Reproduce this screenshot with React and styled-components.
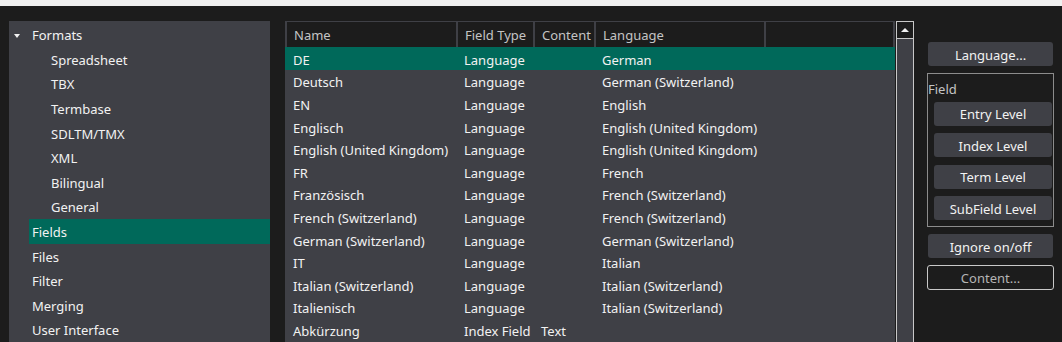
import React from 'react';
import styled, { createGlobalStyle } from 'styled-components';

const COLOR = {
  page: '#1c1c1c',
  panel: '#3f4046',
  accent: '#00695a',
  text: '#f2f2f2',
  muted: '#c4c4c4',
  faded: '#b4b4b4',
  line: '#c8c8c8',
  strip: '#f0f0f0',
};

const GlobalStyle = createGlobalStyle`
  html, body {
    margin: 0;
    padding: 0;
    background: ${COLOR.page};
    overflow: hidden;
  }
  body {
    font-family: "Noto Sans", "Open Sans", sans-serif;
    font-size: 13px;
    color: ${COLOR.text};
  }
`;

const Window = styled.div`
  height: 342px;
  display: flex;
  flex-direction: column;
  overflow: hidden;
`;

const TopStrip = styled.div`
  height: 6px;
  background: ${COLOR.strip};
  flex-shrink: 0;
`;

const Body = styled.div`
  flex: 1;
  display: flex;
  padding: 15px 0 0 9px;
  min-height: 0;
`;

/* ---------- navigation tree ---------- */

const Nav = styled.div`
  width: 261px;
  background: ${COLOR.panel};
  padding-top: 1.5px;
  flex-shrink: 0;
`;

const NavItem = styled.div`
  height: 24.6px;
  box-sizing: border-box;
  padding-top: 1px;
  display: flex;
  align-items: center;
  margin-left: 20px;
  padding-left: ${(p) => (p.$child ? 22 : 3)}px;
  background: ${(p) => (p.$active ? COLOR.accent : 'transparent')};
  white-space: nowrap;
  position: relative;
`;

const Caret = styled.span`
  position: absolute;
  left: -15px;
  top: 11px;
  width: 0;
  height: 0;
  border-left: 3.5px solid transparent;
  border-right: 3.5px solid transparent;
  border-top: 4px solid ${COLOR.text};
`;

/* ---------- grid ---------- */

const GridWrap = styled.div`
  margin-left: 15px;
  width: 610px;
  background: ${COLOR.panel};
  padding-top: 1px;
  overflow: hidden;
  flex-shrink: 0;
`;

const COLS = '169px 75px 59px 168px 127px';

const HeaderRow = styled.div`
  display: grid;
  grid-template-columns: ${COLS};
  column-gap: 2px;
  padding-left: 2px;
  height: 25px;
`;

const HeaderCell = styled.div`
  background: ${COLOR.page};
  color: ${COLOR.muted};
  display: flex;
  align-items: center;
  padding-left: 7px;
  white-space: nowrap;
  overflow: hidden;
`;

const Row = styled.div`
  display: grid;
  grid-template-columns: ${COLS};
  column-gap: 2px;
  padding-left: 2px;
  height: 22.6px;
  background: ${(p) => (p.$selected ? COLOR.accent : 'transparent')};
`;

const Cell = styled.div`
  display: flex;
  align-items: center;
  padding: 3px 0 0 6px;
  box-sizing: border-box;
  white-space: nowrap;
  overflow: hidden;
`;

const ScrollBar = styled.div`
  width: 16px;
  margin-left: 1px;
  border-left: 1px solid ${COLOR.line};
  border-right: 1px solid ${COLOR.line};
  border-top: 1px solid ${COLOR.line};
  background: ${COLOR.panel};
  display: flex;
  flex-direction: column;
  flex-shrink: 0;
`;

const ScrollUp = styled.div`
  height: 16px;
  background: ${COLOR.page};
  border-bottom: 1px solid ${COLOR.line};
  display: flex;
  align-items: center;
  justify-content: center;

  &::before {
    content: '';
    width: 0;
    height: 0;
    border-left: 4px solid transparent;
    border-right: 4px solid transparent;
    border-bottom: 4px solid ${COLOR.text};
  }
`;

/* ---------- buttons ---------- */

const Side = styled.div`
  margin-left: 13px;
  width: 127px;
  display: flex;
  flex-direction: column;
  padding-top: 21px;
  flex-shrink: 0;
`;

const Button = styled.div`
  height: 24px;
  margin: ${(p) => (p.$inset ? '0 1px 0 6px' : '0 1px')};
  padding-top: 1px;
  background: ${COLOR.panel};
  border-radius: 3px;
  color: ${COLOR.text};
  display: flex;
  align-items: center;
  justify-content: center;
  white-space: nowrap;
  box-sizing: border-box;
`;

const OutlineButton = styled(Button)`
  margin: 7px 0 0;
  height: 25px;
  background: transparent;
  border: 1px solid ${COLOR.line};
  color: ${COLOR.faded};
`;

const FieldGroup = styled.div`
  margin: 7px 0;
  border: 1px solid #8c8c8c;
  padding-bottom: 6px;
  display: flex;
  flex-direction: column;
  gap: 7.5px;
`;

const GroupLabel = styled.div`
  color: ${COLOR.muted};
  padding: 7px 0 0 0;
  margin-bottom: -3px;
  line-height: 16px;
`;

const tree = [
  { label: 'Formats', caret: true },
  { label: 'Spreadsheet', child: true },
  { label: 'TBX', child: true },
  { label: 'Termbase', child: true },
  { label: 'SDLTM/TMX', child: true },
  { label: 'XML', child: true },
  { label: 'Bilingual', child: true },
  { label: 'General', child: true },
  { label: 'Fields', active: true },
  { label: 'Files' },
  { label: 'Filter' },
  { label: 'Merging' },
  { label: 'User Interface' },
];

const rows = [
  ['DE', 'Language', '', 'German'],
  ['Deutsch', 'Language', '', 'German (Switzerland)'],
  ['EN', 'Language', '', 'English'],
  ['Englisch', 'Language', '', 'English (United Kingdom)'],
  ['English (United Kingdom)', 'Language', '', 'English (United Kingdom)'],
  ['FR', 'Language', '', 'French'],
  ['Französisch', 'Language', '', 'French (Switzerland)'],
  ['French (Switzerland)', 'Language', '', 'French (Switzerland)'],
  ['German (Switzerland)', 'Language', '', 'German (Switzerland)'],
  ['IT', 'Language', '', 'Italian'],
  ['Italian (Switzerland)', 'Language', '', 'Italian (Switzerland)'],
  ['Italienisch', 'Language', '', 'Italian (Switzerland)'],
  ['Abkürzung', 'Index Field', 'Text', ''],
];

const App = () => (
  <Window>
    <GlobalStyle />
    <TopStrip />
    <Body>
      <Nav>
        {tree.map((item) => (
          <NavItem key={item.label} $child={item.child} $active={item.active}>
            {item.caret && <Caret />}
            {item.label}
          </NavItem>
        ))}
      </Nav>

      <GridWrap>
        <HeaderRow>
          <HeaderCell>Name</HeaderCell>
          <HeaderCell>Field Type</HeaderCell>
          <HeaderCell>Content</HeaderCell>
          <HeaderCell>Language</HeaderCell>
          <HeaderCell />
        </HeaderRow>
        {rows.map((r, i) => (
          <Row key={r[0]} $selected={i === 0}>
            <Cell>{r[0]}</Cell>
            <Cell>{r[1]}</Cell>
            <Cell>{r[2]}</Cell>
            <Cell>{r[3]}</Cell>
            <Cell />
          </Row>
        ))}
      </GridWrap>
      <ScrollBar>
        <ScrollUp />
      </ScrollBar>

      <Side>
        <Button>Language...</Button>
        <FieldGroup>
          <GroupLabel>Field</GroupLabel>
          <Button $inset>Entry Level</Button>
          <Button $inset>Index Level</Button>
          <Button $inset>Term Level</Button>
          <Button $inset>SubField Level</Button>
        </FieldGroup>
        <Button>Ignore on/off</Button>
        <OutlineButton>Content...</OutlineButton>
      </Side>
    </Body>
  </Window>
);

export default App;
